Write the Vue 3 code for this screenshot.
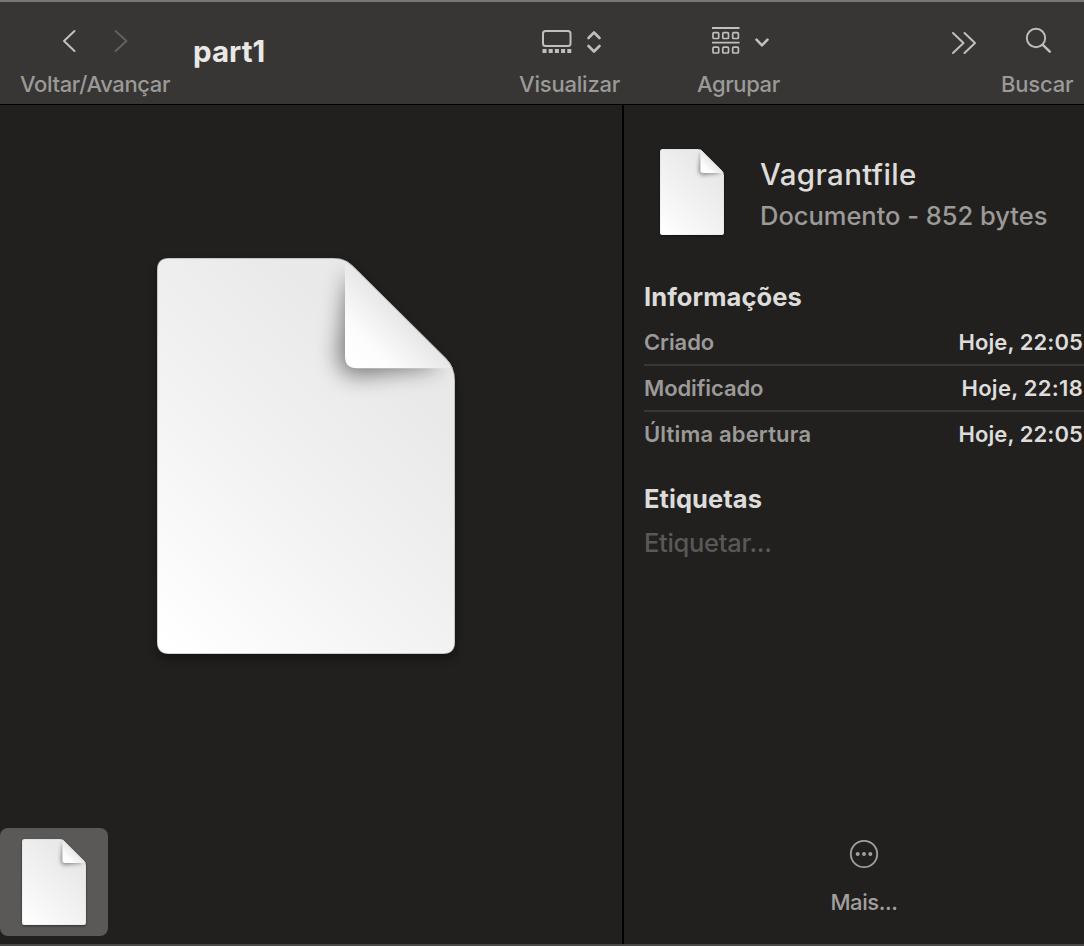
<script setup>
const rows = [
  { label: 'Criado', value: 'Hoje, 22:05', cls: 'r1' },
  { label: 'Modificado', value: 'Hoje, 22:18', cls: 'r2' },
  { label: 'Última abertura', value: 'Hoje, 22:05', cls: 'r3' },
]
</script>

<template>
  <div class="window">
    <svg class="defs" width="0" height="0" aria-hidden="true">
      <defs>
        <linearGradient id="paper" gradientUnits="userSpaceOnUse" x1="10" y1="385" x2="260" y2="135">
          <stop offset="0" stop-color="#ffffff" />
          <stop offset="0.5" stop-color="#f3f3f3" />
          <stop offset="1" stop-color="#e9e9e9" />
        </linearGradient>
        <linearGradient id="fold" x1="0.05" y1="0.95" x2="0.55" y2="0.45">
          <stop offset="0" stop-color="#ffffff" />
          <stop offset="0.35" stop-color="#fcfcfc" />
          <stop offset="1" stop-color="#e3e3e3" />
        </linearGradient>
        <filter id="soft" x="-40%" y="-40%" width="180%" height="180%">
          <feGaussianBlur stdDeviation="11" />
        </filter>
        <clipPath id="sheet">
          <path d="M12 0H176C186 0 191 3 198 10L289 100Q298 109 298 122V383Q298 395 286 395H12Q0 395 0 383V12Q0 0 12 0Z" />
        </clipPath>
        <symbol id="doc" viewBox="0 0 298 395" preserveAspectRatio="none">
          <g clip-path="url(#sheet)">
            <rect width="298" height="395" fill="url(#paper)" />
            <path d="M192 15L182 95Q182 118 202 117L285 107Z" fill="#000" opacity="0.5" filter="url(#soft)" />
            <path d="M188 0V98Q188 110 200 110H298V95L200 0Z" fill="url(#fold)" />
            <path d="M12 0H176C186 0 191 3 198 10L289 100Q298 109 298 122V383Q298 395 286 395H12Q0 395 0 383V12Q0 0 12 0Z" fill="none" stroke="#000" stroke-opacity="0.22" stroke-width="1.600" />
          </g>
        </symbol>
      </defs>
    </svg>

    <header class="toolbar">
      <div class="tool nav">
        <svg width="150" height="69" viewBox="20 2 150 69" fill="none" stroke-width="2" stroke-linecap="round" stroke-linejoin="round">
          <path d="M74.5 31L64 41L74.5 51" stroke="#c2c1bf" />
          <path d="M115.500 31L126.500 41L115.500 51" stroke="#62615f" />
        </svg>
        <span class="caption">Voltar/Avançar</span>
      </div>
      <h1 class="title">part1</h1>
      <div class="tool view">
        <svg width="101" height="69" viewBox="519 2 101 69" fill="none" stroke="#c0bfbd">
          <rect x="543" y="31" width="27.500" height="15" rx="2.500" stroke-width="2" />
          <path d="M542.500 51H571.500" stroke-width="4" stroke-dasharray="4 2.200" />
          <path d="M588.500 38L594 32.500L599.500 38M588.500 46L594 51.500L599.500 46" stroke-width="2.600" stroke-linecap="round" stroke-linejoin="round" />
        </svg>
        <span class="caption">Visualizar</span>
      </div>
      <div class="tool group">
        <svg width="83" height="69" viewBox="697 2 83 69" fill="none" stroke="#c0bfbd">
          <path d="M712 28H739.500M712 42.700H739.500" stroke-width="1.800" />
          <g stroke-width="1.700">
            <rect x="713" y="32.700" width="5.700" height="5.800" rx="1" />
            <rect x="722.800" y="32.700" width="5.700" height="5.800" rx="1" />
            <rect x="732.700" y="32.700" width="5.700" height="5.800" rx="1" />
            <rect x="713" y="47.200" width="5.700" height="5.800" rx="1" />
            <rect x="722.800" y="47.200" width="5.700" height="5.800" rx="1" />
            <rect x="732.700" y="47.200" width="5.700" height="5.800" rx="1" />
          </g>
          <path d="M756.500 39.700L762 45.300L767.500 39.700" stroke-width="2.600" stroke-linecap="round" stroke-linejoin="round" />
        </svg>
        <span class="caption">Agrupar</span>
      </div>
      <div class="tool overflow">
        <svg width="26" height="69" viewBox="951 2 26 69" fill="none" stroke="#c0bfbd" stroke-width="2" stroke-linecap="round" stroke-linejoin="round">
          <path d="M953 33L963.500 43L953 53M964.500 33L975 43L964.500 53" />
        </svg>
      </div>
      <div class="tool search">
        <svg width="72" height="69" viewBox="1001 2 72 69" fill="none" stroke="#c0bfbd" stroke-linecap="round">
          <circle cx="1036" cy="38" r="9.200" stroke-width="1.900" />
          <path d="M1042.800 44.800L1049.800 51.600" stroke-width="2.500" />
        </svg>
        <span class="caption">Buscar</span>
      </div>
    </header>

    <main class="content">
      <section class="gallery">
        <div class="stage">
          <svg class="preview" width="298" height="396"><use href="#doc" width="298" height="396" /></svg>
        </div>
        <div class="thumb">
          <svg class="small-doc" width="64" height="86"><use href="#doc" width="64" height="86" /></svg>
        </div>
      </section>

      <aside class="inspector">
        <div class="file">
          <svg class="small-doc" width="64" height="86"><use href="#doc" width="64" height="86" /></svg>
          <div class="file-text">
            <div class="name">Vagrantfile</div>
            <div class="kind">Documento - 852 bytes</div>
          </div>
        </div>
        <h2 class="heading info">Informações</h2>
        <dl class="rows">
          <div v-for="row in rows" :key="row.label" class="row" :class="row.cls">
            <dt>{{ row.label }}</dt>
            <dd>{{ row.value }}</dd>
          </div>
        </dl>
        <h2 class="heading tags">Etiquetas</h2>
        <div class="tag-input">Etiquetar...</div>
        <div class="more">
          <svg width="30" height="30" viewBox="0 0 30 30">
            <circle cx="15" cy="15" r="13.200" fill="none" stroke="#a1a09e" stroke-width="1.800" />
            <g fill="#a1a09e"><circle cx="8.700" cy="15" r="2" /><circle cx="15" cy="15" r="2" /><circle cx="21.300" cy="15" r="2" /></g>
          </svg>
          <span>Mais...</span>
        </div>
      </aside>
    </main>
  </div>
</template>

<style>
body { background: #21201e; overflow: hidden; }
</style>

<style scoped>
.window {
  box-sizing: border-box;
  width: 1084px;
  height: 946px;
  display: flex;
  flex-direction: column;
  overflow: hidden;
  background: #21201e;
  border-top: 2px solid #787776;
  border-bottom: 2px solid #484746;
  font-family: Inter, "Liberation Sans", sans-serif;
  white-space: nowrap;
}
.defs { position: absolute; }
svg { display: block; flex: none; }
h1, h2, dl, dt, dd { margin: 0; font-weight: inherit; }
.toolbar {
  display: flex;
  flex: none;
  height: 102px;
  padding-left: 20px;
  background: #373634;
  border-bottom: 1px solid #000;
}
.tool { display: flex; flex-direction: column; flex: none; }
.caption { font-size: 22px; line-height: 26px; font-weight: 500; letter-spacing: -0.2px; color: #9b9a98; }
.nav { width: 150px; }
.nav .caption { letter-spacing: -0.37px; }
.group .caption { letter-spacing: -0.4px; }
.title {
  flex: none;
  width: 326px;
  margin: 31px 0 0 23px;
  font-size: 29.5px;
  line-height: 36px;
  font-weight: 700;
  letter-spacing: 0.05px;
  color: #e9e8e7;
}
.view { width: 101px; }
.group { width: 83px; margin-left: 77px; }
.overflow { width: 26px; margin-left: 171px; }
.search { width: 72px; margin-left: 24px; }
.content { display: flex; flex: 1; min-height: 0; }
.gallery {
  display: flex;
  flex-direction: column;
  width: 622px;
  border-right: 2px solid #000;
}
.stage { flex: 1; padding: 153px 0 0 157px; }
.preview { filter: drop-shadow(0 5px 5px rgba(0, 0, 0, 0.4)); }
.thumb {
  display: flex;
  box-sizing: border-box;
  width: 108px;
  height: 108px;
  margin-bottom: 8px;
  padding: 11px 22px;
  border-radius: 8px;
  background: #5a5957;
}
.small-doc { filter: drop-shadow(0 1px 1px rgba(0, 0, 0, 0.45)); }
.inspector {
  display: flex;
  flex-direction: column;
  flex: 1;
  padding-left: 20px;
}
.file { display: flex; padding: 44px 0 0 16px; }
.file-text { margin: 6px 0 0 36px; }
.name { font-size: 29.5px; line-height: 38px; font-weight: 500; letter-spacing: 0.35px; color: #dddcdb; }
.kind { margin-top: 4px; font-size: 25.5px; line-height: 38px; font-weight: 500; letter-spacing: -0.02px; color: #9b9a98; }
.heading { font-size: 25.5px; line-height: 32px; font-weight: 700; letter-spacing: 0.07px; color: #dddcdb; }
.info { margin-top: 46px; }
.rows { margin-top: 7px; }
.row {
  display: flex;
  justify-content: space-between;
  height: 44px;
  padding-right: 1px;
  border-bottom: 2px solid #383735;
  font-size: 22px;
  line-height: 44px;
  font-weight: 600;
}
.row:last-child { border-bottom: 0; }
dt { color: #9b9a98; }
.r1 dt, .r2 dt { letter-spacing: -0.1px; }
.r3 dt { letter-spacing: 0.17px; }
dd { color: #dddcdb; letter-spacing: 0.1px; }
.r2 dd { letter-spacing: 0.27px; }
.tags { margin-top: 27px; }
.tag-input { margin-top: 12px; font-size: 25.5px; line-height: 32px; font-weight: 500; letter-spacing: -0.3px; color: #595856; }
.more {
  display: flex;
  flex-direction: column;
  align-items: center;
  width: 440px;
  margin-top: 280px;
  font-size: 22px;
  line-height: 28px;
  font-weight: 500;
  letter-spacing: -0.4px;
  color: #a1a09e;
}
.more span { margin-top: 19px; }
</style>
